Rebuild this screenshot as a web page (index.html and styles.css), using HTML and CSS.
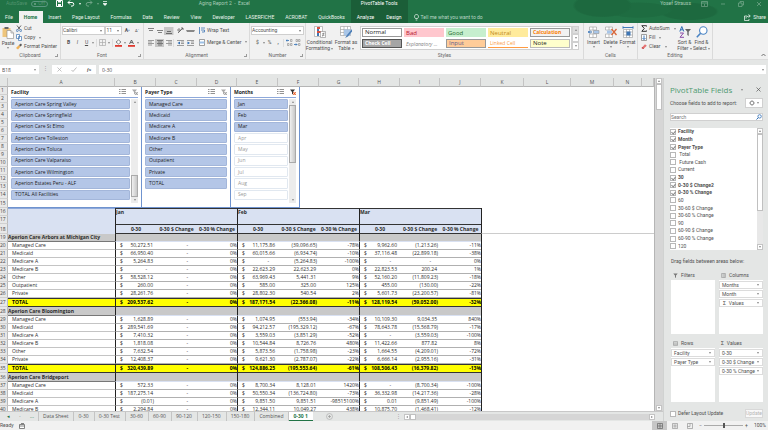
FILE: index.html
```html
<!DOCTYPE html>
<html lang="en">
<head>
    <meta charset="UTF-8">
    <meta name="viewport" content="width=device-width, initial-scale=1.0">
    <title>Aging Report 2 - Excel</title>
    <link rel="stylesheet" href="styles.css">
</head>
<body>
    <header class="titlebar">
        <div class="title-left">
            <div class="title-row">
                <div class="quick-access">
                    <span>AutoSave</span>
                    <button class="autosave"><i></i>Off</button>
                    <button class="qa-btn" aria-label="Save"><svg width="7" height="7" viewBox="0 0 7 7"><path d="M.5.5h6v6h-6z" fill="none" stroke="#fff"/><path d="M2 .5h3v2H2zM2 4h3v2.500H2z" fill="#fff"/></svg></button>
                    <button class="qa-btn" aria-label="Undo"><svg width="8" height="7" viewBox="0 0 8 7"><path d="M3 .5L1 2.500l2 2M1 2.500h4a1.800 1.800 0 0 1 0 3.600H4" fill="none" stroke="#fff"/></svg></button>
                    <span class="caret light"></span>
                    <button class="qa-btn dim" aria-label="Redo"><svg width="8" height="7" viewBox="0 0 8 7"><path d="M5 .5l2 2-2 2M7 2.500H3a1.800 1.800 0 0 0 0 3.600h1" fill="none" stroke="#fff"/></svg></button>
                    <span class="caret light dim"></span>
                    <button class="qa-btn" aria-label="Customize"><svg width="4" height="5" viewBox="0 0 4 5"><path d="M0 .5h4M0 2.500h4L2 4.500z" stroke="#fff" stroke-width=".7" fill="#fff"/></svg></button>
                </div>
                <span class="doc-title">Aging Report 2 &nbsp;-&nbsp; Excel</span>
            </div>
            <nav class="tabs">
                <a href="#">File</a>
                <a href="#" class="active">Home</a>
                <a href="#">Insert</a>
                <a href="#">Page Layout</a>
                <a href="#">Formulas</a>
                <a href="#">Data</a>
                <a href="#">Review</a>
                <a href="#">View</a>
                <a href="#">Developer</a>
                <a href="#">LASERFICHE</a>
                <a href="#">ACROBAT</a>
                <a href="#">QuickBooks</a>
            </nav>
        </div>
        <div class="title-context">
            <div class="title-row">PivotTable Tools</div>
            <nav class="tabs">
                <a href="#">Analyze</a>
                <a href="#">Design</a>
            </nav>
        </div>
        <div class="title-right">
            <div class="title-row">
                <span class="user">Yosef Strauss</span>
                <div class="window-btns">
                    <button aria-label="Ribbon options"><svg width="7" height="6" viewBox="0 0 7 6"><path d="M.5.5h6v5h-6zM.5 2h6M3.500 5V3" fill="none" stroke="#fff" stroke-width=".7"/></svg></button>
                    <button aria-label="Minimize"><svg width="6" height="6" viewBox="0 0 6 6"><path d="M1 3h4" stroke="#fff" stroke-width=".7"/></svg></button>
                    <button aria-label="Restore"><svg width="6" height="6" viewBox="0 0 6 6"><path d="M.5 2h3.500v3.500H.5zM2 2V.5h3.500V4H4" fill="none" stroke="#fff" stroke-width=".7"/></svg></button>
                    <button aria-label="Close"><svg width="6" height="6" viewBox="0 0 6 6"><path d="M1 1l4 4M5 1L1 5" stroke="#fff" stroke-width=".7"/></svg></button>
                </div>
            </div>
            <div class="tell-row">
                <button class="tell"><svg width="5" height="7" viewBox="0 0 5 7"><path d="M1.500 4.500C-.5 2.500.8.5 2.500.5s3 2 1 4zM1.700 6h1.600" fill="none" stroke="#fff" stroke-width=".7"/></svg>Tell me what you want to do</button>
                <button class="share"><svg width="7" height="7" viewBox="0 0 7 7"><path d="M3 2H.5v4.500H5V5M2 4.500C2 3 3 2 6 2M4.500.5L6.300 2 4.500 3.600" fill="none" stroke="#fff" stroke-width=".7"/></svg>Share</button>
            </div>
        </div>
    </header>

    <section class="ribbon">
        <div class="group clipboard">
            <div class="group-body">
                <button class="big"><svg width="12" height="13" viewBox="0 0 12 13"><path d="M.5 2h8v9h-8z" fill="#eec57c"/><path d="M2.500 1h4v2h-4z" fill="#666"/><path d="M5 4.500h4l2.500 2.500v5.500H5z" fill="#fff" stroke="#888" stroke-width=".6"/><path d="M9 4.500V7h2.500" fill="none" stroke="#888" stroke-width=".6"/></svg>Paste<span class="caret"></span></button>
                <div class="stack">
                    <button><svg width="6" height="7" viewBox="0 0 6 7"><path d="M1 .5l3 4M5 .5L2 4.500" stroke="#444" stroke-width=".8"/><circle cx="1.300" cy="5.500" r="1" fill="none" stroke="#3f76b5" stroke-width=".8"/><circle cx="4.700" cy="5.500" r="1" fill="none" stroke="#3f76b5" stroke-width=".8"/></svg>Cut</button>
                    <button><svg width="6" height="7" viewBox="0 0 6 7"><path d="M.5.500h3v4h-3zM2.500 2.500h3v4h-3z" fill="#fff" stroke="#3f76b5" stroke-width=".7"/></svg>Copy <span class="caret"></span></button>
                    <button><svg width="6" height="7" viewBox="0 0 6 7"><path d="M0 5l3-3 1.500 1.500-2.500 3z" fill="#eeb159"/><path d="M3 2l2-1.500L6 2 4.500 3.500z" fill="#555"/></svg>Format Painter</button>
                </div>
            </div>
            <div class="group-name">Clipboard<span class="launcher"></span></div>
        </div>

        <div class="group font">
            <div class="group-body column">
                <div class="tools">
                    <span class="drop wide"><select aria-label="Font"><option>Calibri</option></select></span>
                    <span class="drop size"><select aria-label="Font size"><option>11</option></select></span>
                    <button class="tool"><b>A</b><sup>&#94;</sup></button>
                    <button class="tool"><small>A</small><sup>&#711;</sup></button>
                </div>
                <div class="tools">
                    <button class="tool"><b>B</b></button>
                    <button class="tool"><i>I</i></button>
                    <button class="tool"><u>U</u></button><span class="caret"></span>
                    <span class="sep"></span>
                    <button class="tool" aria-label="Borders"><svg width="7" height="7" viewBox="0 0 7 7"><path d="M.5.500h6v6h-6zM3.500.500v6M.5 3.500h6" fill="none" stroke="#aaa" stroke-width=".7"/></svg></button><span class="caret"></span>
                    <span class="sep"></span>
                    <button class="tool" aria-label="Fill color"><svg width="7" height="8" viewBox="0 0 7 8"><path d="M1 3l2.500-2L6 3 3.500 5z" fill="#fff" stroke="#555" stroke-width=".7"/><path d="M0 6h7v1.800H0z" fill="#e03a2f"/></svg></button><span class="caret"></span>
                    <button class="tool" aria-label="Font color"><svg width="7" height="8" viewBox="0 0 7 8"><path d="M1.500 5l2-4 2 4M2.300 3.600h2.400" fill="none" stroke="#444" stroke-width=".8"/><path d="M0 6h7v1.800H0z" fill="#e03a2f"/></svg></button><span class="caret"></span>
                </div>
            </div>
            <div class="group-name">Font<span class="launcher"></span></div>
        </div>

        <div class="group align">
            <div class="group-body">
                <div class="align-icons">
                    <button class="tool" aria-label="Top align"><svg width="6" height="6" viewBox="0 0 6 6"><path d="M0 .5h6M1 2.500h4" stroke="#666" stroke-width=".8"/></svg></button>
                    <button class="tool" aria-label="Middle align"><svg width="6" height="6" viewBox="0 0 6 6"><path d="M0 2.500h6M1 4.500h4" stroke="#666" stroke-width=".8"/></svg></button>
                    <button class="tool on" aria-label="Bottom align"><svg width="6" height="6" viewBox="0 0 6 6"><path d="M1 3.500h4M0 5.500h6" stroke="#555" stroke-width=".8"/></svg></button>
                    <span class="sep"></span>
                    <button class="tool" aria-label="Orientation"><svg width="7" height="7" viewBox="0 0 7 7"><path d="M1 6l5-5M4 1h2v2" fill="none" stroke="#555" stroke-width=".8"/><circle cx="2" cy="3" r="1.200" fill="none" stroke="#555" stroke-width=".7"/></svg></button>
                    <span class="caret"></span>
                    <button class="tool" aria-label="Align left"><svg width="6" height="6" viewBox="0 0 6 6"><path d="M0 .5h6M0 2h4M0 3.500h6M0 5h4" stroke="#777" stroke-width=".7"/></svg></button>
                    <button class="tool on" aria-label="Center"><svg width="6" height="6" viewBox="0 0 6 6"><path d="M0 .5h6M1 2h4M0 3.500h6M1 5h4" stroke="#555" stroke-width=".7"/></svg></button>
                    <button class="tool" aria-label="Align right"><svg width="6" height="6" viewBox="0 0 6 6"><path d="M0 .5h6M2 2h4M0 3.500h6M2 5h4" stroke="#777" stroke-width=".7"/></svg></button>
                    <span class="sep"></span>
                    <button class="tool" aria-label="Decrease indent"><svg width="7" height="6" viewBox="0 0 7 6"><path d="M0 .5h7M4 2h3M4 3.500h3M0 5.500h7" stroke="#777" stroke-width=".7"/><path d="M3 1.500v3L.5 3z" fill="#2f6eb5"/></svg></button>
                    <button class="tool" aria-label="Increase indent"><svg width="7" height="6" viewBox="0 0 7 6"><path d="M0 .5h7M4 2h3M4 3.500h3M0 5.500h7" stroke="#777" stroke-width=".7"/><path d="M.5 1.500v3L3 3z" fill="#2f6eb5"/></svg></button>
                </div>
                <div class="stack two">
                    <button><svg width="6" height="7" viewBox="0 0 6 7"><path d="M.5 0v7M2 1h4M2 3h3.500v2H3" fill="none" stroke="#3f76b5" stroke-width=".8"/></svg>Wrap Text</button>
                    <button><svg width="6" height="7" viewBox="0 0 6 7"><path d="M.5.500h5v6h-5z" fill="#fff" stroke="#777" stroke-width=".7"/><path d="M.5 2.500h5v2h-5z" fill="#9dc0e6"/></svg>Merge &amp; Center <span class="caret"></span></button>
                </div>
            </div>
            <div class="group-name">Alignment<span class="launcher"></span></div>
        </div>

        <div class="group number">
            <div class="group-body column">
                <div class="tools"><span class="drop full"><select aria-label="Number format"><option>Accounting</option></select></span></div>
                <div class="tools">
                    <button class="tool">$</button><span class="caret"></span>
                    <button class="tool">%</button>
                    <button class="tool"><b>,</b></button>
                    <span class="sep"></span>
                    <button class="tool" aria-label="Increase decimal"><svg width="7" height="7" viewBox="0 0 7 7"><path d="M0 1.500h3M1 .5L0 1.500l1 1" fill="none" stroke="#2f6eb5" stroke-width=".8"/><path d="M4.500.500h1.500v2H4.500zM1.500 4.500H3v2H1.500zM4.500 4.500H6v2H4.500z" fill="none" stroke="#777" stroke-width=".5"/></svg></button>
                    <button class="tool" aria-label="Decrease decimal"><svg width="7" height="7" viewBox="0 0 7 7"><path d="M0 5.500h3M2 4.500l1 1-1 1" fill="none" stroke="#2f6eb5" stroke-width=".8"/><path d="M2 .5h1.500v2H2zM4.500.500H6v2H4.500zM4.500 4.500H6v2H4.500z" fill="none" stroke="#777" stroke-width=".5"/></svg></button>
                </div>
            </div>
            <div class="group-name">Number<span class="launcher"></span></div>
        </div>

        <div class="group styles">
            <div class="group-body">
                <button class="big"><svg width="12" height="12" viewBox="0 0 12 12"><path d="M.5.500h8v10h-8z" fill="#fff" stroke="#999" stroke-width=".6"/><path d="M3 1h3v2H3zM3 5h4v2H3z" fill="#d8513f"/><path d="M3 3h2v2H3zM3 7h2v3H3z" fill="#3f76b5"/><path d="M6.500 5.500h5v6h-5z" fill="#fff" stroke="#888" stroke-width=".6"/><path d="M8 7.700h2.500M8 9.300h2.500M10 6.500L8.500 10.500" stroke="#555" stroke-width=".5"/></svg>Conditional<span>Formatting <span class="caret"></span></span></button>
                <button class="big"><svg width="12" height="12" viewBox="0 0 12 12"><path d="M.5.500h10v9H.5zM.5 3.500h10M.5 6.500h10M4 .5v9M7.500.500v9" fill="#fff" stroke="#999" stroke-width=".6"/><path d="M4 3.500h6.500v6H4z" fill="#a9c6e8"/><path d="M12 3L7 9l-2 3 3-1.500 4-5z" fill="#4d7fb8"/></svg>Format as<span>Table <span class="caret"></span></span></button>
                <div class="gallery">
                    <button class="normal">Normal</button>
                    <button class="bad">Bad</button>
                    <button class="good">Good</button>
                    <button class="neutral">Neutral</button>
                    <button class="calculation">Calculation</button>
                    <button class="check">Check Cell</button>
                    <button class="explain">Explanatory ...</button>
                    <button class="input">Input</button>
                    <button class="linked">Linked Cell</button>
                    <button class="note">Note</button>
                </div>
                <div class="gallery-nav">
                    <button class="off" aria-label="Scroll up"><span class="caret up"></span></button>
                    <button aria-label="Scroll down"><span class="caret"></span></button>
                    <button aria-label="More"><span class="caret"></span></button>
                </div>
            </div>
            <div class="group-name">Styles</div>
        </div>

        <div class="group cells">
            <div class="group-body">
                <button class="big"><svg width="12" height="12" viewBox="0 0 12 12"><path d="M1.500 1h7v3h-7zM1.500 8h7v3.500h-7zM5 1v3M5 8v3.500" fill="#fff" stroke="#999" stroke-width=".6"/><path d="M5.500 4.500H11v3H5.500z" fill="#a9c6e8" stroke="#888" stroke-width=".5"/><path d="M0 6h4M2 4.500L.5 6 2 7.500" fill="none" stroke="#2f6eb5"/></svg>Insert<span class="caret"></span></button>
                <button class="big"><svg width="12" height="12" viewBox="0 0 12 12"><path d="M.5 1h7v3h-7zM.5 8h7v3.500h-7zM4 1v3M4 8v3.500" fill="#fff" stroke="#999" stroke-width=".6"/><path d="M2 4.500h5v3H2z" fill="#a9c6e8"/><path d="M6.500 3l5 6M11.500 3l-5 6" stroke="#d8663a" stroke-width="1.300"/></svg>Delete<span class="caret"></span></button>
                <button class="big"><svg width="12" height="12" viewBox="0 0 12 12"><path d="M1.500 3.500h9v8h-9zM4.500 3.500v8M7.500 3.500v8M1.500 6h9M1.500 9h9" fill="#fff" stroke="#999" stroke-width=".6"/><path d="M4.500 5.500h4v4h-4z" fill="#3f76b5"/><path d="M1 1.500h10M1 .3v2.400M11 .3v2.400" stroke="#2f6eb5" stroke-width=".9"/></svg>Format<span class="caret"></span></button>
            </div>
            <div class="group-name">Cells</div>
        </div>

        <div class="group editing">
            <div class="group-body">
                <div class="stack">
                    <button><svg width="6" height="7" viewBox="0 0 6 7"><path d="M5.500 1.500V.7H.8L3.300 3.500.8 6.300h4.700v-.8" fill="none" stroke="#333"/></svg>AutoSum <span class="caret"></span></button>
                    <button><svg width="6" height="7" viewBox="0 0 6 7"><path d="M.5.500h5v6h-5z" fill="#fff" stroke="#777" stroke-width=".7"/><path d="M3 1.500v4M1.500 4L3 5.500 4.500 4" fill="none" stroke="#2f6eb5" stroke-width=".9"/></svg>Fill <span class="caret"></span></button>
                    <button><svg width="6" height="7" viewBox="0 0 6 7"><path d="M.5 5L4 1.200l1.800 1.600L2.300 6z" fill="#e57373"/><path d="M.5 5l1-1L3 5.500 2.300 6z" fill="#c94747"/></svg>Clear <span class="caret"></span></button>
                </div>
                <button class="big"><svg width="12" height="12" viewBox="0 0 12 12"><path d="M.8 5.500l2-5 2 5M1.500 3.800h2.600" fill="none" stroke="#2f6eb5"/><path d="M1 7h3.500L1 11.300h4" fill="none" stroke="#8b4ba8"/><path d="M6 3h6L9.700 5.700V10L8.300 9V5.700z" fill="#666"/></svg>Sort &amp;<span>Filter <span class="caret"></span></span></button>
                <button class="big"><svg width="12" height="12" viewBox="0 0 12 12"><circle cx="7.300" cy="4.500" r="3.700" fill="#fff" stroke="#4a84c4" stroke-width="1.100"/><path d="M4.600 7.300L.8 11.200" stroke="#4a84c4" stroke-width="1.600"/></svg>Find &amp;<span>Select <span class="caret"></span></span></button>
            </div>
            <div class="group-name">Editing</div>
        </div>
        <button class="collapse" aria-label="Collapse ribbon"><svg width="5" height="4" viewBox="0 0 5 4"><path d="M.5 3l2-2 2 2" fill="none" stroke="#555" stroke-width=".8"/></svg></button>
    </section>

    <section class="formula-bar">
        <div class="name-box"><input type="text" value="B18" aria-label="Name box"><span class="caret"></span></div>
        <span class="grip">&#8942;</span>
        <div class="fx">
            <button aria-label="Cancel"><svg width="5" height="5" viewBox="0 0 5 5"><path d="M.5.500l4 4M4.500.500l-4 4" stroke="#aaa" stroke-width=".7"/></svg></button>
            <button aria-label="Enter"><svg width="6" height="5" viewBox="0 0 6 5"><path d="M.5 3l1.500 1.500L5.500.500" fill="none" stroke="#aaa" stroke-width=".8"/></svg></button>
            <button class="fx-btn"><i>fx</i></button>
        </div>
        <div class="formula"><input type="text" value="0-30" aria-label="Formula"><span class="caret"></span></div>
    </section>

    <main class="workspace">
        <div class="book">
            <div class="sheet-area">
                <div class="sheet">
                    <table>
                        <colgroup>
                            <col class="c-head"><col class="c-name">
                            <col class="c-data"><col class="c-data"><col class="c-pct">
                            <col class="c-data"><col class="c-data"><col class="c-pct">
                            <col class="c-data"><col class="c-pct"><col class="c-data">
                            <col class="c-k"><col class="c-l"><col class="c-k"><col class="c-n"><col>
                        </colgroup>
                        <thead>
                            <tr id="letters"></tr>
                        </thead>
                        <tbody id="rows"></tbody>
                    </table>
                    <div class="slicers" id="slicers"></div>
                </div>
                <div class="vscroll">
                    <button aria-label="Scroll up"><span class="caret up"></span></button>
                    <span class="thumb"></span>
                    <span class="track"></span>
                    <button aria-label="Scroll down"><span class="caret"></span></button>
                </div>
            </div>
            <div class="sheet-tabs">
                <div class="tab-nav"><span class="prev">&#9666;</span><span>&middot;</span><span class="prev">...</span></div>
                <a href="#">Data Sheet</a>
                <a href="#">0-30</a>
                <a href="#">0-30 Test</a>
                <a href="#">30-60</a>
                <a href="#">60-90</a>
                <a href="#">90-120</a>
                <a href="#">120-150</a>
                <a href="#">150-180</a>
                <a href="#">Combined</a>
                <a href="#" class="active">0-30 1</a>
                <button class="add" aria-label="New sheet"><svg width="7" height="7" viewBox="0 0 7 7"><circle cx="3.500" cy="3.500" r="3" fill="none" stroke="#aaa" stroke-width=".6"/><path d="M3.500 2v3M2 3.500h3" stroke="#999" stroke-width=".7"/></svg></button>
                <div class="hscroll">
                    <span class="grip">&#8942;</span>
                    <button aria-label="Scroll left"><span class="caret left"></span></button>
                    <span class="thumb"></span>
                    <span class="track"></span>
                    <button aria-label="Scroll right"><span class="caret right"></span></button>
                </div>
            </div>
        </div>

        <aside class="pane">
            <div class="pane-head">
                <h2>PivotTable Fields</h2>
                <span class="caret"></span>
                <button aria-label="Close pane"><svg width="5" height="5" viewBox="0 0 5 5"><path d="M.5.500l4 4M4.500.500l-4 4" stroke="#555" stroke-width=".7"/></svg></button>
            </div>
            <div class="pane-choose">
                <span>Choose fields to add to report:</span>
                <button class="gear" aria-label="Tools"><svg width="6" height="6" viewBox="0 0 6 6"><circle cx="3" cy="3" r="1.700" fill="none" stroke="#888" stroke-width=".8"/><path d="M3 0v1M3 5v1M0 3h1M5 3h1M1 1l.6.6M4.400 4.400L5 5M5 1l-.6.6M1.600 4.400L1 5" stroke="#888" stroke-width=".8"/></svg><span class="caret"></span></button>
            </div>
            <div class="pane-search">
                <input type="text" placeholder="Search" aria-label="Search">
                <svg width="6" height="6" viewBox="0 0 6 6"><circle cx="3.600" cy="2.400" r="1.700" fill="none" stroke="#2f6eb5" stroke-width=".8"/><path d="M2.300 3.700L.5 5.500" stroke="#2f6eb5"/></svg>
            </div>
            <div class="field-box">
                <div class="fields" id="fields"></div>
                <div class="vscroll small">
                    <button aria-label="Scroll up"><span class="caret up"></span></button>
                    <span class="thumb"></span>
                    <span class="track"></span>
                    <button aria-label="Scroll down"><span class="caret"></span></button>
                </div>
            </div>
            <p class="drag">Drag fields between areas below:</p>
            <div class="areas">
                <section>
                    <h3><svg width="5" height="5" viewBox="0 0 5 5"><path d="M.3.500h4.400L3 2.500V5L2 4.300V2.500z" fill="#777"/></svg>Filters</h3>
                    <div class="area"></div>
                </section>
                <section>
                    <h3><svg width="5" height="5" viewBox="0 0 5 5"><path d="M.5.500h4v4h-4zM2 .5v4M3.300.500v4" fill="none" stroke="#888" stroke-width=".5"/></svg>Columns</h3>
                    <div class="area">
                        <button>Months<span class="caret"></span></button>
                        <button>Month<span class="caret"></span></button>
                        <button><span class="sigma">&Sigma;</span>Values<span class="caret"></span></button>
                    </div>
                </section>
                <section>
                    <h3><svg width="5" height="5" viewBox="0 0 5 5"><path d="M.5.500h4v4h-4zM.5 2h4M.5 3.300h4" fill="none" stroke="#888" stroke-width=".5"/></svg>Rows</h3>
                    <div class="area">
                        <button>Facility<span class="caret"></span></button>
                        <button>Payer Type<span class="caret"></span></button>
                    </div>
                </section>
                <section>
                    <h3><span>&Sigma;</span>Values</h3>
                    <div class="area">
                        <button>0-30<span class="caret"></span></button>
                        <button>0-30 $ Change<span class="caret"></span></button>
                        <button>0-30 % Change<span class="caret"></span></button>
                    </div>
                </section>
            </div>
            <div class="pane-foot">
                <label><input type="checkbox">Defer Layout Update</label>
                <button class="update" disabled>Update</button>
            </div>
        </aside>
    </main>

    <footer class="status">
        <span>Ready</span>
        <svg width="6" height="6" viewBox="0 0 6 6"><path d="M.5 1.500h5v4h-5zM.5 3h5M2 .5h3" fill="#fff" stroke="#666" stroke-width=".8"/></svg>
        <div class="views">
            <button class="on" aria-label="Normal view"><svg width="6" height="6" viewBox="0 0 6 6"><path d="M.5.500h5v5h-5zM.5 3h5M3 .5v5" fill="none" stroke="#666" stroke-width=".7"/></svg></button>
            <button aria-label="Page layout"><svg width="6" height="6" viewBox="0 0 6 6"><path d="M.5.500h5v5h-5zM1.500 2h3M1.500 3h3M1.500 4h3" fill="none" stroke="#888" stroke-width=".6"/></svg></button>
            <button aria-label="Page break"><svg width="6" height="6" viewBox="0 0 6 6"><path d="M.5.500h5v5h-5zM.5 3.500H3v-3" fill="none" stroke="#888" stroke-width=".6"/></svg></button>
            <span>&minus;</span>
            <input type="range" min="10" max="190" value="100" aria-label="Zoom">
            <span>+</span>
            <span class="percent">100%</span>
        </div>
    </footer>

    <script src="script.js"></script>
</body>
</html>
```

FILE: styles.css
```css
:root {
    --green: #217346;
    --green-dark: #1b5e38;
    --chrome: #e4e6e5;
    --ribbon: #f1f1f1;
    --line: #d0d0d0;
    --slicer: #b4c6e7;
    --slicer-line: #8ea9db;
    --text: #505050;
    --ui-font: Roboto, "Liberation Sans", sans-serif;
    --cell-font: "Open Sans", "Noto Sans", sans-serif;
}

* {
    box-sizing: border-box;
}

body {
    margin: 0;
    height: 100vh;
    display: flex;
    flex-direction: column;
    overflow: hidden;
    font: 5px/7px var(--ui-font);
    color: var(--text);
    background: var(--chrome);
}

button,
input,
select {
    font: inherit;
    color: inherit;
    margin: 0;
    padding: 0;
    border: 0;
    background: none;
    min-width: 0;
}

a {
    color: inherit;
    text-decoration: none;
}

svg {
    display: block;
    flex: none;
}

.caret {
    display: inline-block;
    flex: none;
    border: 1px solid transparent;
    border-top: 2px solid #888;
    border-bottom: 0;
    vertical-align: middle;
}

.caret.light {
    border-top-color: #fff;
}

.caret.up {
    transform: rotate(180deg);
}

.caret.left {
    transform: rotate(90deg);
}

.caret.right {
    transform: rotate(-90deg);
}

.dim {
    opacity: 0.35;
}

/* Title bar */
.titlebar {
    display: flex;
    flex: none;
    background: var(--green);
    color: #e9f3ed;
}

.title-row {
    display: flex;
    align-items: center;
    height: 11px;
    padding-bottom: 4px;
}

.title-left .title-row {
    justify-content: space-between;
    padding-left: 6px;
    padding-right: 101px;
    color: #a9cdb8;
}

.quick-access {
    display: flex;
    align-items: center;
    gap: 4px;
}

.quick-access > span:first-child,
.autosave {
    opacity: 0.35;
}

.autosave {
    display: flex;
    align-items: center;
    gap: 2px;
    height: 6px;
    padding: 0 2px;
    border: 1px solid #cde;
    border-radius: 3px;
    margin-right: 4px;
}

.autosave i {
    width: 2px;
    height: 2px;
    border-radius: 50%;
    background: #fff;
}

.tabs {
    display: flex;
    height: 12px;
}

.tabs a {
    padding: 0 6px 0 5px;
    line-height: 12px;
}

.tabs .active {
    background: var(--ribbon);
    color: var(--green);
    font-weight: bold;
}

.title-context {
    background: var(--green-dark);
    color: #fff;
}

.title-context .title-row {
    justify-content: center;
}

.title-context .tabs a {
    padding: 0 6px;
}

.title-right {
    flex: 1;
    background:
        radial-gradient(ellipse 30px 12px at 54% 24%, #1d693f 90%, transparent),
        radial-gradient(ellipse 34px 8px at 64% 44%, #1e6c41 90%, transparent),
        radial-gradient(ellipse 30px 9px at 78% 50%, #1d693f 90%, transparent);
}

.title-right .title-row {
    justify-content: flex-end;
    color: #a9cdb8;
}

.window-btns {
    display: flex;
    gap: 12px;
    padding: 0 6px 0 10px;
    opacity: 0.4;
}

.tell-row {
    display: flex;
    justify-content: space-between;
    height: 12px;
    padding: 0 2px 0 6px;
}

.tell,
.share {
    display: flex;
    align-items: center;
    gap: 2px;
}

.tell {
    color: #b9d6c5;
}

/* Ribbon */
.ribbon {
    display: flex;
    flex: none;
    height: 37px;
    background: var(--ribbon);
    border-bottom: 1px solid #dcdcdc;
}

.group {
    flex: none;
    display: flex;
    flex-direction: column;
    border-right: 1px solid #dadada;
}

.clipboard { width: 61px; }
.font { width: 83px; }
.align { width: 106px; }
.number { width: 56px; }
.styles { width: 278px; }
.cells { width: 54px; }
.editing { width: 75px; }

.group-body {
    flex: 1;
    display: flex;
    padding: 2px 1px 0;
}

.group-body.column {
    flex-direction: column;
}

.group-name {
    position: relative;
    text-align: center;
    color: #666;
    line-height: 8px;
}

.launcher {
    position: absolute;
    right: 2px;
    bottom: 2px;
    width: 3px;
    height: 3px;
    border: 1px solid #999;
    border-width: 0 1px 1px 0;
}

.big {
    display: flex;
    flex-direction: column;
    align-items: center;
    line-height: 6px;
    padding-top: 1px;
    gap: 1px;
    white-space: nowrap;
}

.clipboard .big { width: 14px; }
.styles .big { width: 28px; gap: 0; }
.styles .big:first-child { width: 25px; }
.cells .big { width: 17px; gap: 1px; }
.editing .big { width: 17px; gap: 0; }

.styles svg,
.editing .big svg {
    margin-bottom: 1px;
}

.stack {
    display: flex;
    flex-direction: column;
    gap: 2px;
    padding-left: 1px;
}

.stack.two {
    padding-left: 4px;
    gap: 4px;
    padding-top: 1px;
}

.stack button {
    display: flex;
    align-items: center;
    gap: 2px;
    height: 7px;
    white-space: nowrap;
}

.stack .caret {
    margin-left: 2px;
}

.stack.two button {
    height: 8px;
}

.editing .stack {
    width: 37px;
    padding-left: 2px;
}

.tools {
    display: flex;
    align-items: center;
    height: 9px;
    margin-bottom: 4px;
    padding-top: 2px;
}

.font .tools:last-child,
.number .tools:last-child {
    justify-content: space-between;
    padding: 0 3px;
}

.tool {
    display: flex;
    align-items: center;
    justify-content: center;
    min-width: 7px;
    height: 8px;
}

.font .tools:first-child .tool {
    width: 10px;
}

.tool.on {
    background: #c6c6c6;
}

.tool sup {
    font-size: 4px;
    line-height: 4px;
    color: #2f6eb5;
}

.tool small {
    font-size: 4px;
}

.sep {
    width: 1px;
    height: 8px;
    background: #ddd;
}

.drop {
    position: relative;
    height: 9px;
    border: 1px solid #cfcfcf;
    background: #fff;
}

.drop::after {
    content: "";
    position: absolute;
    right: 2px;
    top: 3px;
    border: 1px solid transparent;
    border-top: 2px solid #777;
    border-bottom: 0;
}

.drop select {
    display: block;
    width: 100%;
    height: 7px;
    line-height: 7px;
    appearance: none;
}

.drop.wide { width: 44px; }
.drop.size { width: 17px; }
.drop.full { width: 100%; }

.align-icons {
    display: grid;
    grid-template-columns: 9px 9px 9px 2px 11px 9px;
    grid-template-rows: 9px 9px;
    row-gap: 3px;
    align-items: center;
    padding: 1px 0 0 1px;
}

.gallery {
    flex: 1;
    display: grid;
    grid-template-columns: repeat(5, 1fr);
    grid-template-rows: 9px 9px;
    align-content: center;
    gap: 2px;
    height: 24px;
    margin-top: 1px;
    padding: 0 1px;
    border: 1px solid var(--line);
    background: #fff;
}

.gallery button {
    text-align: left;
    padding: 0 2px;
    font: 6px/8px var(--cell-font);
    white-space: nowrap;
    overflow: hidden;
}

.gallery .normal { border: 1px solid #999; color: #222; line-height: 7px; }
.gallery .bad { background: #ffc7ce; color: #b3122a; }
.gallery .good { background: #c6efce; color: #226b2a; }
.gallery .neutral { background: #ffeb9c; color: #c08a1c; }
.gallery .calculation { background: #f2f2f2; color: #fa7d00; border: 1px solid #999; font: bold 5px/7px var(--cell-font); }
.gallery .check { background: #a5a5a5; color: #fff; border: 1px solid #555; font: bold 5px/7px var(--cell-font); }
.gallery .explain { color: #7f7f7f; font-style: italic; font-size: 5px; }
.gallery .input { background: #ffcc99; color: #5c5c8a; border: 1px solid #999; line-height: 7px; }
.gallery .linked { color: #fa9a3d; border-bottom: 1px solid #ff9b42; font-size: 5px; }
.gallery .note { background: #ffffcc; color: #222; border: 1px solid #bbb; line-height: 7px; }

.gallery-nav {
    display: flex;
    flex-direction: column;
    width: 7px;
    height: 24px;
    margin: 1px 3px 0 0;
}

.gallery-nav button {
    flex: 1;
    display: flex;
    align-items: center;
    justify-content: center;
    border: 1px solid var(--line);
    background: #fff;
}

.gallery-nav .off {
    background: #ddd;
}

.cells .group-body {
    padding-left: 1px;
}

.collapse {
    margin-left: auto;
    align-self: flex-end;
    padding: 2px;
}

/* Formula bar */
.formula-bar {
    display: flex;
    flex: none;
    height: 18px;
    padding: 5px 2px 4px 0;
    font-family: var(--cell-font);
}

.name-box,
.formula,
.fx {
    display: flex;
    align-items: center;
    background: #fff;
}

.name-box {
    width: 39px;
    padding: 0 3px 0 2px;
}

.name-box input,
.formula input {
    flex: 1;
    width: 0;
    height: 9px;
}

.formula-bar > .grip {
    width: 13px;
    text-align: center;
    color: #999;
}

.fx {
    width: 44px;
    justify-content: space-around;
    margin-right: 3px;
}

.fx-btn {
    font: bold 5px/7px "Liberation Serif", serif;
}

.formula {
    flex: 1;
    padding: 0 2px 0 3px;
}

/* Worksheet */
.workspace {
    flex: 1;
    display: flex;
    min-height: 0;
}

.book {
    flex: 1;
    display: flex;
    flex-direction: column;
    min-width: 0;
}

.sheet-area {
    flex: 1;
    display: flex;
    min-height: 0;
}

.sheet {
    position: relative;
    flex: 1;
    min-width: 0;
    overflow: hidden;
    background: #fff;
    border-right: 1px solid #b5b5b5;
}

.sheet table {
    width: 100%;
    table-layout: fixed;
    border-collapse: separate;
    border-spacing: 0;
    font-family: var(--cell-font);
    color: #2c2c2c;
}

.c-head { width: 8px; }
.c-name { width: 107px; }
.c-data { width: 41px; }
.c-pct { width: 40px; }
.c-k { width: 43px; }
.c-l { width: 47px; }
.c-n { width: 28px; }

.sheet th,
.sheet td {
    height: 8px;
    padding: 0;
    line-height: 7px;
    font-weight: normal;
    white-space: nowrap;
    overflow: hidden;
}

.sheet thead th {
    height: 9px;
    line-height: 8px;
    background: var(--chrome);
    border-right: 1px solid #c4c4c4;
    border-bottom: 1px solid #b5b5b5;
    color: #555;
}

.sheet tbody th {
    padding-right: 2px;
    background: #e8e8e8;
    border-right: 1px solid #bbb;
    border-bottom: 1px solid #d0d0d0;
    color: #444;
    text-align: center;
}

.sheet tr.tall td,
.sheet tr.tall th {
    height: 9px;
    line-height: 8px;
}

.sheet td.edge {
    border-left: 1px solid #222;
}

.sheet td.name {
    padding-left: 4px;
}

.band td.fill {
    background: #d9e1f2;
}

.band td.fill,
.sheet .group-row td.name,
.heads td {
    font-weight: bold;
}

.band.first td.fill:not(.name) {
    border-top: 1px solid #333;
}

.band.first td.name {
    border-top: 1px solid var(--slicer-line);
}

.heads td.fill:not(.name) {
    border-top: 1px solid #333;
    border-bottom: 1px solid #333;
    text-align: center;
}

.heads td.blank {
    border-bottom: 1px solid #ccc;
}

.group-row td.fill {
    background: #c9c9c9;
    border-bottom: 1px solid #d9e1f2;
}

.sheet .group-row td.name {
    padding-left: 0;
    border-bottom: 1px solid #777;
}

.item td.fill {
    border-bottom: 1px solid #b0b0b0;
}

.item td.name {
    border-bottom-color: #c4c4c4;
}

.total td.fill {
    background: #ff0;
    border-top: 1px solid #333;
    border-bottom: 1px solid #333;
    font-weight: bold;
    color: #000;
}

.sheet .total.tall td {
    line-height: 7px;
}

.amount {
    display: flex;
    justify-content: space-between;
    padding: 0 3px 0 4px;
}

.amount span:last-child {
    margin-left: auto;
}

.amount.negative {
    padding-right: 2px;
}

.amount.zero {
    padding-right: 9px;
}

.sheet td.percent {
    text-align: right;
}

/* Slicers sit over the first rows of the grid */
.slicers {
    position: absolute;
    top: 9px;
    left: 8px;
    display: flex;
    height: 121px;
    font-family: var(--cell-font);
}

.slicer {
    display: flex;
    flex-direction: column;
    padding: 0 3px 4px;
    background: #fff;
    border-right: 1px solid #6f93cf;
    border-bottom: 1px solid #6f93cf;
}

.slicer.facility { width: 134px; }
.slicer.payer { width: 89px; }
.slicer.months { width: 69px; }

.slicer-head {
    display: flex;
    align-items: center;
    height: 11px;
    gap: 6px;
    margin-bottom: 1px;
    border-bottom: 1px solid var(--slicer-line);
    font-weight: bold;
    color: #222;
}

.slicer-head span {
    margin-right: auto;
}

.slicer-body {
    flex: 1;
    display: flex;
    gap: 1px;
    min-height: 0;
}

.slicer-list {
    flex: 1;
    display: grid;
    grid-template-rows: repeat(9, 1fr) 2px;
    gap: 1px;
    overflow: hidden;
}

.slicer-list button {
    padding: 0 3px;
    border: 1px solid #a3b6da;
    border-radius: 1px;
    background: var(--slicer);
    color: #222;
    text-align: left;
    line-height: 7px;
}

.slicer-list button.off {
    background: #fff;
    border-color: #e1e8f0;
    color: #999;
}

/* Scrollbars */
.vscroll {
    display: flex;
    flex-direction: column;
    width: 8px;
    padding: 0 1px;
    background: #d6d6d6;
}

.vscroll button,
.hscroll button {
    display: flex;
    align-items: center;
    justify-content: center;
    width: 6px;
    height: 6px;
    border: 1px solid #c4c4c4;
    background: #fff;
}

.vscroll .thumb {
    height: 26px;
    border: 1px solid #c0c0c0;
    background: #fff;
}

.vscroll .track {
    flex: 1;
}

.vscroll.small {
    width: 6px;
    padding: 0;
    background: #e8e8e8;
}

.vscroll.small .thumb {
    height: 77px;
}

.slicer .vscroll {
    width: 7px;
    padding: 0;
    background: #ececec;
}

.slicer .vscroll button {
    width: 7px;
    border: 0;
    background: none;
}

.slicer .vscroll .thumb {
    background: linear-gradient(90deg, #f0f0f0, #c8c8c8);
    border-color: #aaa;
}

.facility .thumb {
    order: 1;
}

.slicer.facility .thumb {
    height: 22px;
}

.facility .vscroll button:last-child {
    order: 2;
}

.slicer.months .thumb {
    height: 58px;
}

/* Sheet tabs */
.sheet-tabs {
    display: flex;
    flex: none;
    height: 10px;
    font-family: var(--cell-font);
    border-top: 1px solid #c8c8c8;
}

.sheet-tabs a {
    padding: 0 5px 0 4px;
    line-height: 9px;
    border-right: 1px solid #c4c4c4;
    color: #555;
    white-space: nowrap;
}

.sheet-tabs a.active {
    background: #fff;
    color: var(--green);
    font-weight: bold;
    border-right: 0;
    border-bottom: 1px solid var(--green);
}

.tab-nav {
    display: flex;
    justify-content: space-between;
    width: 39px;
    padding: 0 4px 0 7px;
    line-height: 9px;
    border-right: 1px solid #c4c4c4;
}

.prev {
    color: var(--green);
}

.add {
    padding: 1px 13px;
}

.hscroll {
    display: flex;
    align-items: center;
    width: 274px;
    margin-left: auto;
    padding: 0 8px 0 7px;
}

.hscroll .grip {
    width: 8px;
    color: #999;
}

.hscroll .thumb {
    width: 6px;
    height: 6px;
    border: 1px solid #c0c0c0;
    background: #fff;
}

.hscroll .track {
    flex: 1;
    height: 6px;
    background: #d6d6d6;
}

/* Field list pane */
.pane {
    flex: none;
    width: 105px;
    display: flex;
    flex-direction: column;
    padding: 0 5px 0 6px;
    border-left: 1px solid #d0d2d1;
}

.pane-head {
    display: flex;
    align-items: center;
    height: 20px;
    padding-top: 3px;
}

.pane-head h2 {
    margin: 0 auto 0 0;
    font: 8px/10px var(--cell-font);
    color: #4d9a70;
}

.pane-head button {
    padding: 0 2px 0 13px;
}

.pane-choose {
    display: flex;
    align-items: center;
    justify-content: space-between;
    height: 10px;
    white-space: nowrap;
}

.gear {
    display: flex;
    align-items: center;
    justify-content: space-evenly;
    width: 18px;
    height: 10px;
    border: 1px solid var(--line);
    background: #fff;
}

.pane-search {
    display: flex;
    align-items: center;
    height: 8px;
    margin: 5px 0 7px;
    border: 1px solid var(--line);
    background: #fff;
}

.pane-search input {
    flex: 1;
    height: 6px;
}

.field-box {
    display: flex;
    height: 122px;
    background: #fff;
}

.fields {
    flex: 1;
    display: flex;
    flex-direction: column;
}

.fields label {
    flex: 1;
}

.fields label,
.pane-foot label {
    display: flex;
    align-items: center;
    gap: 2px;
    white-space: pre;
}

.fields label.used {
    font-weight: bold;
}

input[type="checkbox"] {
    appearance: none;
    position: relative;
    flex: none;
    width: 6px;
    height: 6px;
    border: 1px solid #b8b8b8;
    background: #fff;
}

input[type="checkbox"]:checked::after {
    content: "";
    position: absolute;
    left: 1px;
    top: 0;
    width: 2px;
    height: 3px;
    border: solid #888;
    border-width: 0 1px 1px 0;
    transform: rotate(40deg);
}

.drag {
    margin: 0;
    padding: 8px 0 5px 1px;
    white-space: nowrap;
}

.areas {
    display: grid;
    grid-template-columns: 1fr 1fr;
    column-gap: 4px;
    row-gap: 4px;
    padding-left: 1px;
}

.areas h3 {
    display: flex;
    align-items: center;
    gap: 3px;
    height: 10px;
    margin: 0;
    padding-left: 2px;
    font-size: 5px;
    font-weight: normal;
}

.area {
    height: 54px;
    padding-top: 1px;
    background: #fff;
}

.area button {
    display: flex;
    align-items: center;
    width: 100%;
    height: 8px;
    margin-bottom: 1px;
    padding: 0 3px 0 2px;
    border: 1px solid #dcdcdc;
    white-space: nowrap;
}

.area .caret {
    margin-left: auto;
}

.sigma {
    margin: 0 3px 0 1px;
}

.pane-foot {
    display: flex;
    align-items: center;
    justify-content: space-between;
    height: 9px;
    margin-top: 7px;
}

.update {
    width: 18px;
    height: 9px;
    border: 1px solid #d8d8d8;
    background: #f8f8f8;
    color: #b5b5b5;
}

/* Status bar */
.status {
    display: flex;
    align-items: center;
    flex: none;
    gap: 5px;
    height: 9px;
    padding-right: 2px;
    background: var(--ribbon);
}

.views {
    display: flex;
    align-items: center;
    margin-left: auto;
}

.views button {
    display: flex;
    align-items: center;
    justify-content: center;
    width: 15px;
    height: 9px;
}

.views .on {
    background: #c6c6c6;
}

.views > span {
    padding: 0 2px;
}

.views .percent {
    padding: 0 0 0 4px;
}

.views input {
    appearance: none;
    width: 39px;
    height: 7px;
    background: linear-gradient(#aaa, #aaa) center / 100% 1px no-repeat;
}

.views input::-webkit-slider-thumb {
    appearance: none;
    width: 2px;
    height: 5px;
    background: #555;
}
```

FILE: script.js
```js
const LETTERS = ['A', 'B', 'C', 'D', 'E', 'F', 'G', 'H', 'I', 'J', 'K', 'L', 'M', 'N'];
const MONTHS = ['Jan', 'Feb', 'Mar'];
const TALL_ROWS = [15, 18, 27, 28, 35, 36];

// name, then 0-30 / $ change / % change for each month
const ROWS = [
    ['group', 'Aperion Care Arbors at Michigan City'],
    ['item', 'Managed Care', '50,272.51', '-', '0%', '11,175.86', '(39,096.65)', '-78%', '9,962.60', '(1,213.26)', '-11%'],
    ['item', 'Medicaid', '66,950.40', '-', '0%', '60,015.66', '(6,934.74)', '-10%', '37,116.48', '(22,899.18)', '-38%'],
    ['item', 'Medicare A', '5,264.83', '-', '0%', '-', '(5,264.83)', '-100%', '-', '-', '0%'],
    ['item', 'Medicare B', '-', '-', '0%', '22,623.29', '22,623.29', '0%', '22,823.53', '200.24', '1%'],
    ['item', 'Other', '58,528.12', '-', '0%', '63,969.43', '5,441.31', '9%', '52,160.20', '(11,809.23)', '-18%'],
    ['item', 'Outpatient', '260.00', '-', '0%', '585.00', '325.00', '125%', '455.00', '(130.00)', '-22%'],
    ['item', 'Private', '28,261.76', '-', '0%', '28,802.30', '540.54', '2%', '5,601.73', '(23,200.57)', '-81%'],
    ['total', 'TOTAL', '209,537.62', '-', '0%', '187,171.54', '(22,366.08)', '-11%', '128,119.54', '(59,052.00)', '-32%'],
    ['group', 'Aperion Care Bloomington'],
    ['item', 'Managed Care', '1,628.89', '-', '0%', '1,074.95', '(553.94)', '-34%', '10,109.30', '9,034.35', '840%'],
    ['item', 'Medicaid', '289,541.69', '-', '0%', '94,212.57', '(195,329.12)', '-67%', '78,643.78', '(15,568.79)', '-17%'],
    ['item', 'Medicare A', '7,410.32', '-', '0%', '3,559.03', '(3,851.29)', '-52%', '-', '(3,559.03)', '-100%'],
    ['item', 'Medicare B', '1,818.08', '-', '0%', '10,544.84', '8,726.76', '480%', '11,422.66', '877.82', '8%'],
    ['item', 'Other', '7,632.54', '-', '0%', '5,873.56', '(1,758.98)', '-23%', '1,664.55', '(4,209.01)', '-72%'],
    ['item', 'Private', '12,408.37', '-', '0%', '9,621.30', '(2,787.07)', '-22%', '6,666.14', '(2,955.16)', '-31%'],
    ['total', 'TOTAL', '320,439.89', '-', '0%', '124,886.25', '(195,553.64)', '-61%', '108,506.43', '(16,379.82)', '-13%'],
    ['group', 'Aperion Care Bridgeport'],
    ['item', 'Managed Care', '572.33', '-', '0%', '8,700.34', '8,128.01', '1420%', '-', '(8,700.34)', '-100%'],
    ['item', 'Medicaid', '187,275.14', '-', '0%', '50,550.34', '(136,724.80)', '-73%', '36,332.98', '(14,217.36)', '-28%'],
    ['item', 'Medicare A', '(0.01)', '-', '0%', '9,851.50', '9,851.51', '-98515100%', '0.01', '(9,851.49)', '-100%'],
    ['item', 'Medicare B', '2,294.84', '-', '0%', '12,344.11', '10,049.27', '438%', '10,875.70', '(1,468.41)', '-12%']
];

const SLICERS = [
    { id: 'facility', title: 'Facility', scroll: true, items: ['Aperion Care Spring Valley', 'Aperion Care Springfield', 'Aperion Care St Elmo', 'Aperion Care Tolleston', 'Aperion Care Toluca', 'Aperion Care Valparaiso', 'Aperion Care Wilmington', 'Aperion Estates Peru - ALF', 'TOTAL All Facilities'] },
    { id: 'payer', title: 'Payer Type', items: ['Managed Care', 'Medicaid', 'Medicare A', 'Medicare B', 'Other', 'Outpatient', 'Private', 'TOTAL'] },
    { id: 'months', title: 'Months', scroll: true, filtered: 3, items: ['Jan', 'Feb', 'Mar', 'Apr', 'May', 'Jun', 'Jul', 'Aug', 'Sep'] }
];

const FIELDS = [
    ['Facility', true], ['Month', true], ['Payer Type', true], [' Total'], [' Future Cash'], ['Current'],
    ['30', true], ['0-30 $ Change2', true], ['0-30 % Change', true], ['60'], ['30-60 $ Change'],
    ['30-60 % Change'], ['90'], ['60-90 $ Change'], ['60-90 % Change'], ['120']
];

const blanks = '<td class="blank"></td>'.repeat(4);

function edge(i) {
    return i % 3 === 0 ? ' edge' : '';
}

function row(number, type, cells) {
    const tall = TALL_ROWS.includes(number) ? ' tall' : '';
    return `<tr class="${type}${tall}"><th>${number}</th>${cells}<td class="blank${type ? ' edge' : ''}"></td>${blanks}</tr>`;
}

function amount(value, i) {
    const kind = value === '-' ? ' zero' : value.startsWith('(') ? ' negative' : '';
    const sign = i % 3 === 0 ? '<span>$</span>' : '';
    return `<td class="fill${edge(i)}"><div class="amount${kind}">${sign}<span>${value}</span></div></td>`;
}

function dataRow(number, [type, name, ...values]) {
    let cells = `<td class="fill name">${name}</td>`;
    for (let i = 0; i < 9; i++) {
        if (type === 'group') cells += `<td class="fill${edge(i)}"></td>`;
        else if (i % 3 === 2) cells += `<td class="fill percent">${values[i]}</td>`;
        else cells += amount(values[i], i);
    }
    return row(number, type === 'group' ? 'group-row' : type, cells);
}

function buildSheet() {
    document.getElementById('letters').innerHTML =
        '<th></th>' + LETTERS.map(l => `<th>${l}</th>`).join('') + '<th></th>';

    let html = '';
    for (let n = 1; n <= 15; n++) html += row(n, '', '<td></td>'.repeat(10));

    const name = '<td class="fill name"></td>';
    html += row(16, 'band first', name + MONTHS.map(m => `<td class="fill edge" colspan="3">${m}</td>`).join(''));
    html += row(17, 'band', name + '<td class="fill edge" colspan="3"></td>'.repeat(3));
    html += row(18, 'band heads', name + MONTHS.map(() =>
        '<td class="fill edge">0-30</td><td class="fill">0-30 $ Change</td><td class="fill">0-30 % Change</td>').join(''));

    ROWS.forEach((r, i) => html += dataRow(19 + i, r));
    document.getElementById('rows').innerHTML = html;
}

function buildSlicers() {
    const list = '<svg width="7" height="6" viewBox="0 0 7 6"><path d="M0 .5h1.500M0 2.500h1.500M0 4.500h1.500M2.500.5H7M2.500 2.500H7M2.500 4.500H7" stroke="#777" stroke-width=".8"/></svg>';
    const scroll = '<div class="vscroll"><button aria-label="Scroll up"><span class="caret up"></span></button><span class="thumb"></span><span class="track"></span><button aria-label="Scroll down"><span class="caret"></span></button></div>';

    document.getElementById('slicers').innerHTML = SLICERS.map(s => {
        const on = s.filtered;
        const funnel = `<svg width="6" height="6" viewBox="0 0 6 6"><path d="M0 .5h5L3 3v2.500L2 4.700V3z" fill="${on ? '#333' : '#aaa'}"/><path d="M3.300 3.300l2.400 2.400M5.700 3.300l-2.400 2.400" stroke="${on ? '#e8571c' : '#999'}" stroke-width="1.100"/></svg>`;
        const items = s.items.map((t, i) => `<button class="${on && i >= on ? 'off' : ''}">${t}</button>`).join('');
        return `<div class="slicer ${s.id}">
            <div class="slicer-head"><span>${s.title}</span>${list}${funnel}</div>
            <div class="slicer-body"><div class="slicer-list">${items}</div>${s.scroll ? scroll : ''}</div>
        </div>`;
    }).join('');
}

function buildFields() {
    document.getElementById('fields').innerHTML = FIELDS.map(([name, used]) =>
        `<label class="${used ? 'used' : ''}"><input type="checkbox"${used ? ' checked' : ''}>${name}</label>`).join('');
}

buildSheet();
buildSlicers();
buildFields();
```
